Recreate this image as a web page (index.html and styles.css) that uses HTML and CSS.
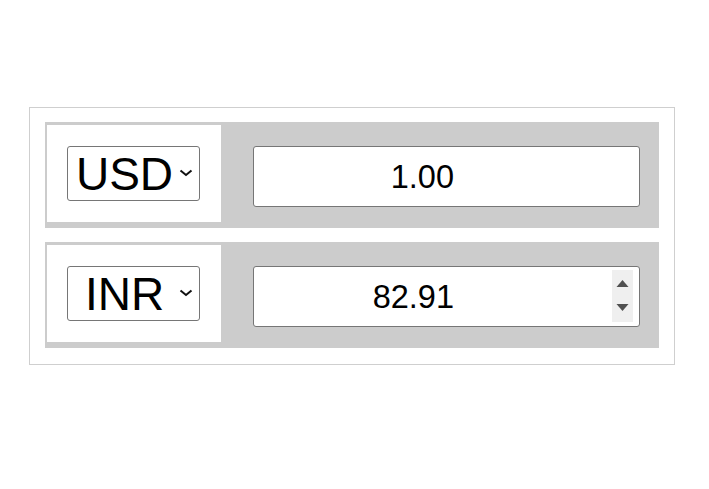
FILE: index.html
```html
<!DOCTYPE html>
<html>
<head>
<meta charset="utf-8">
<title>Currency converter</title>
<link rel="stylesheet" href="styles.css">
</head>
<body>
<div class="converter">
  <div class="row">
    <div class="cur-cell">
      <div class="select-wrap">
        <select class="cur-select">
          <option selected>USD</option>
          <option>INR</option>
          <option>EUR</option>
        </select>
        <svg class="chevron" width="14" height="8" viewBox="0 0 14 8"><path d="M1.5 1.5 L7 6 L12.5 1.5" fill="none" stroke="#111" stroke-width="2"/></svg>
      </div>
    </div>
    <div class="amount-wrap">
      <input class="amount" type="text" value="1.00">
    </div>
  </div>
  <div class="row">
    <div class="cur-cell">
      <div class="select-wrap">
        <select class="cur-select">
          <option>USD</option>
          <option selected>INR</option>
          <option>EUR</option>
        </select>
        <svg class="chevron" width="14" height="8" viewBox="0 0 14 8"><path d="M1.5 1.5 L7 6 L12.5 1.5" fill="none" stroke="#111" stroke-width="2"/></svg>
      </div>
    </div>
    <div class="amount-wrap">
      <input class="amount" type="text" value="82.91">
      <div class="spinner">
        <svg width="21" height="52" viewBox="0 0 21 52"><path d="M4.5 17 L10.5 10 L16.5 17 Z" fill="#505050"/><path d="M4.5 34 L10.5 41 L16.5 34 Z" fill="#505050"/></svg>
      </div>
    </div>
  </div>
</div>
</body>
</html>
```

FILE: styles.css
```css
html, body {
  margin: 0;
  padding: 0;
  background: #fff;
  font-family: "Liberation Sans", Arial, sans-serif;
}

.converter {
  box-sizing: border-box;
  width: 646px;
  margin: 107px 0 0 29px;
  padding: 14px 15px 16px 15px;
  border: 1px solid #cfcfcf;
  display: flex;
  flex-direction: column;
  gap: 14px;
}

.row {
  display: flex;
  align-items: flex-start;
  height: 106px;
  background: #cccccc;
}

.cur-cell {
  box-sizing: border-box;
  width: 174px;
  margin: 3px 0 0 2px;
  padding: 21px 0 21px 20px;
  background: #fff;
}

.select-wrap {
  position: relative;
  width: 133px;
  height: 55px;
}

.cur-select {
  -webkit-appearance: none;
  appearance: none;
  box-sizing: border-box;
  width: 133px;
  height: 55px;
  margin: 0;
  padding: 0 18px 0 0;
  border: 1px solid #767676;
  border-radius: 3px;
  background: #fff;
  color: #000;
  font-family: "Liberation Sans", Arial, sans-serif;
  font-size: 46px;
  text-align: center;
  text-align-last: center;
}

.chevron {
  position: absolute;
  right: 7px;
  top: 23px;
  pointer-events: none;
}

.amount-wrap {
  position: relative;
  margin: 24px 0 0 32px;
  width: 387px;
  height: 61px;
}

.amount {
  box-sizing: border-box;
  width: 387px;
  height: 61px;
  margin: 0;
  padding: 2px 185px 0 0;
  border: 1px solid #767676;
  border-radius: 3px;
  background: #fff;
  color: #000;
  font-family: "Liberation Sans", Arial, sans-serif;
  font-size: 32.5px;
  text-align: right;
}

.spinner {
  position: absolute;
  left: 359px;
  top: 4px;
  width: 21px;
  height: 52px;
  background: #efefef;
}

.spinner svg {
  display: block;
}
```
